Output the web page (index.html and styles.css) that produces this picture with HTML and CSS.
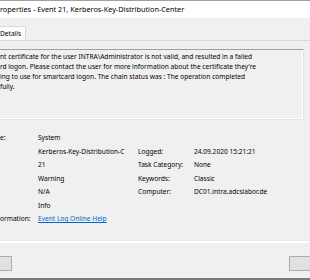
FILE: index.html
```html
<!DOCTYPE html>
<html lang="en">
<head>
  <meta charset="UTF-8">
  <title>Event Properties</title>
  <link rel="stylesheet" href="styles.css">
</head>
<body>
  <div class="window">
    <div class="titlebar">roperties - Event 21, Kerberos-Key-Distribution-Center</div>

    <div class="tabs">
      <div class="tab">Details</div>
    </div>

    <div class="panel">
      <div class="desc">
        <div>nt certificate for the user INTRA\Administrator is not valid, and resulted in a failed</div>
        <div>rd logon. Please contact the user for more information about the certificate they're</div>
        <div>ing to use for smartcard logon. The chain status was : The operation completed</div>
        <div>fully.</div>
      </div>

      <div class="fields">
        <div class="label">e:</div>
        <div class="value">System</div>
        <div></div>
        <div></div>

        <div class="label"></div>
        <div class="value">Kerberos-Key-Distribution-C</div>
        <div class="label">Logged:</div>
        <div class="value">24.09.2020 15:21:21</div>

        <div class="label"></div>
        <div class="value">21</div>
        <div class="label">Task Category:</div>
        <div class="value">None</div>

        <div class="label"></div>
        <div class="value">Warning</div>
        <div class="label">Keywords:</div>
        <div class="value">Classic</div>

        <div class="label"></div>
        <div class="value">N/A</div>
        <div class="label">Computer:</div>
        <div class="value">DC01.intra.adcslabor.de</div>

        <div class="label"></div>
        <div class="value">Info</div>
        <div></div>
        <div></div>

        <div class="label">ormation:</div>
        <div class="value"><a href="#">Event Log Online Help</a></div>
        <div></div>
        <div></div>
      </div>
    </div>

    <div class="buttons">
      <div class="btn left"></div>
      <div class="btn right"></div>
    </div>
  </div>
</body>
</html>
```

FILE: styles.css
```css
html, body {
  margin: 0;
  padding: 0;
}
body {
  width: 310px;
  height: 280px;
  overflow: hidden;
  background: #f0f0f0;
  font-family: 'Segoe UI', 'Noto Sans', sans-serif;
  font-size: 6.6px;
  color: #000;
}
.window {
  height: 277px;
  border-top: 1px solid #a0a0a0;
  border-bottom: 2px solid #7a7a7a;
  display: flex;
  flex-direction: column;
}
.titlebar {
  height: 17px;
  line-height: 17px;
  background: #fff;
  font-size: 7.3px;
}
.tabs {
  height: 22px;
  display: flex;
  align-items: flex-end;
}
.tab {
  height: 13px;
  line-height: 13px;
  width: 25px;
  background: #fcfcfc;
  border: 1px solid #d9d9d9;
  border-left: none;
  border-bottom: none;
}
.panel {
  height: 200px;
  border-top: 1px solid #d9d9d9;
  border-bottom: 1px solid #fff;
  box-shadow: 0 1px 0 #fff, 0 -0.5px 0 #e3e3e3 inset;
}
.desc {
  margin: 8px 6px 0 0;
  height: 67px;
  padding: 2px 0 0 0;
  line-height: 10px;
  border-top: 1px solid #a0a0a0;
  border-right: 1px solid #e3e3e3;
  border-bottom: 1px solid #e3e3e3;
  box-shadow: inset -1px -1px 0 #fff;
}
.fields {
  margin-top: 11px;
  display: grid;
  grid-template-columns: 38px 100px 56px 1fr;
  grid-auto-rows: 13.5px;
  align-items: center;
  white-space: nowrap;
}
a {
  color: #0066cc;
}
.buttons {
  display: flex;
  justify-content: space-between;
  margin-top: 14px;
}
.btn {
  height: 13px;
  background: #e1e1e1;
  border: 1px solid #adadad;
}
.btn.left {
  width: 11px;
  border-left: none;
}
.btn.right {
  width: 20px;
  border-right: none;
}
```
